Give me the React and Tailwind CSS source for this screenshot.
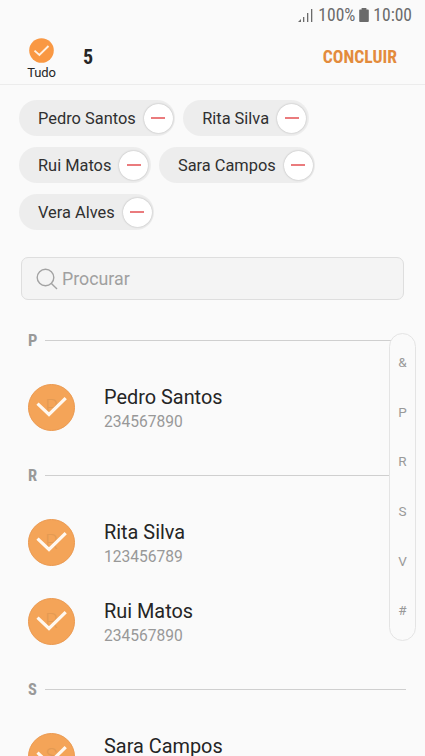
import React from "react";

const chipRows = [
  ["Pedro Santos", "Rita Silva"],
  ["Rui Matos", "Sara Campos"],
  ["Vera Alves"],
];

const sections = [
  { letter: "P", contacts: [{ name: "Pedro Santos", phone: "234567890" }] },
  {
    letter: "R",
    contacts: [
      { name: "Rita Silva", phone: "123456789" },
      { name: "Rui Matos", phone: "234567890" },
    ],
  },
  { letter: "S", contacts: [{ name: "Sara Campos" }] },
];

const indexLetters = ["&", "P", "R", "S", "V", "#"];

const StatusBar = () => (
  <div className="flex h-[30px] shrink-0 items-center justify-end pr-[13px] text-[17.5px] leading-[30px] text-[#6b6b6b]">
    <svg width="15" height="14" viewBox="0 0 15 14" className="mr-[5px]" fill="#6b6b6b">
      <path d="M0 14 L3 11 V14 Z" />
      <rect x="5" y="9" width="1.3" height="5" />
      <rect x="9" y="5" width="1.3" height="9" />
      <rect x="13" y="1" width="1.3" height="13" />
    </svg>
    <span className="font-['Roboto_Condensed',Roboto,sans-serif] [font-stretch:75%]">100%</span>
    <svg width="10" height="14" viewBox="0 0 10 14" className="mx-[4px]" fill="#6b6b6b">
      <path d="M2.6 0 H7.4 V1.4 H9 Q9.8 1.4 9.8 2.2 V13 Q9.8 14 9 14 H1 Q0.2 14 0.2 13 V2.2 Q0.2 1.4 1 1.4 H2.6 Z" />
    </svg>
    <span className="font-['Roboto_Condensed',Roboto,sans-serif] [font-stretch:75%]">10:00</span>
  </div>
);

const Header = () => (
  <header className="flex h-[55px] shrink-0 border-b border-[#ececec]">
    <button className="ml-[27px] flex w-[29px] flex-col items-center pt-[8px]">
      <svg width="25" height="25" viewBox="0 0 25 25">
        <circle cx="12.5" cy="12.5" r="12.3" fill="#f99843" />
        <path d="M5.5 12.6 L10.4 17 L19.5 8" fill="none" stroke="#fff1e2" strokeWidth="1.9" />
      </svg>
      <span className="mt-[2px] text-[13px] leading-[15px] tracking-[-0.1px] text-[#252525]">Tudo</span>
    </button>
    <span className="ml-[27px] font-['Roboto_Condensed',Roboto,sans-serif] text-[20px] leading-[55px] font-bold text-[#252525] [font-stretch:75%]">
      5
    </span>
    <button className="mr-[28px] ml-auto font-['Roboto_Condensed',Roboto,sans-serif] text-[17.6px] leading-[54px] font-bold text-[#e38b3c] [font-stretch:75%]">
      CONCLUIR
    </button>
  </header>
);

const Chip = ({ name }) => (
  <div className="flex h-[36px] items-center rounded-full bg-[#ededed] pr-[2.5px] pl-[19px]">
    <span className="pt-[2px] text-[16.4px] leading-[22px] text-[#303030]">{name}</span>
    <button className="ml-[8px] flex size-[29px] items-center justify-center rounded-full bg-white shadow-[0_0_2px_rgba(0,0,0,0.28)]">
      <span className="h-[2px] w-[14px] bg-[#ea7b7d]" />
    </button>
  </div>
);

const Avatar = ({ letter }) => (
  <div className="relative flex size-[47px] items-center justify-center rounded-full border border-[#eb994f] bg-[#f4a458]">
    <span className="text-[20px] leading-none font-light text-[#e39a53]">{letter}</span>
    <svg className="absolute inset-0" width="45" height="45" viewBox="0 0 45 45">
      <path d="M8.5 18.7 L20 29.5 L36.7 13.2" fill="none" stroke="#fff8f0" strokeWidth="3.2" />
    </svg>
  </div>
);

const ContactRow = ({ contact }) => (
  <div className="flex h-[79px] pt-[15.5px] pl-[28px]">
    <Avatar letter={contact.name[0]} />
    <div className="ml-[29px] pt-[1px]">
      <p className="text-[19.9px] leading-[25px] text-[#252525]">{contact.name}</p>
      {contact.phone && (
        <p className="mt-[1px] text-[15.6px] leading-[22px] text-[#989898]">{contact.phone}</p>
      )}
    </div>
  </div>
);

const Section = ({ section }) => (
  <section>
    <div className="flex h-[56px] items-center pr-[19px] pl-[28px]">
      <span className="w-[16.5px] pt-[2px] font-['Roboto_Condensed',Roboto,sans-serif] text-[16.5px] leading-none font-bold text-[#999] [font-stretch:75%]">
        {section.letter}
      </span>
      <div className="h-px flex-1 bg-[#cfcfcf]" />
    </div>
    {section.contacts.map((contact) => (
      <ContactRow key={contact.name} contact={contact} />
    ))}
  </section>
);

const App = () => {
  return (
    <div className="relative flex h-[756px] w-[425px] flex-col overflow-hidden bg-[#fafafa] font-[Roboto,sans-serif]">
      <StatusBar />
      <Header />

      {/* Selected contacts */}
      <div className="flex shrink-0 flex-col gap-[11px] pt-[15px] pl-[19px]">
        {chipRows.map((row, i) => (
          <div key={i} className="flex gap-[8px]">
            {row.map((name) => (
              <Chip key={name} name={name} />
            ))}
          </div>
        ))}
      </div>

      {/* Search field */}
      <div className="mt-[27px] mr-[21px] ml-[21px] flex h-[43px] shrink-0 items-center rounded-[7px] border border-[#dedede] bg-[#f4f4f4] pl-[14px]">
        <svg width="22" height="22" viewBox="0 0 22 22" fill="none" stroke="#a3a3a3" strokeWidth="1.4">
          <circle cx="9.5" cy="9.5" r="8.3" />
          <path d="M15.4 15.4 L21 21" />
        </svg>
        <span className="ml-[4px] pt-[2px] text-[17.8px] text-[#a0a0a0]">Procurar</span>
      </div>

      <main className="mt-[12px] shrink-0">
        {sections.map((section) => (
          <Section key={section.letter} section={section} />
        ))}
      </main>

      {/* Index scroller floating over the list */}
      <nav className="absolute top-[333px] right-[9px] flex h-[308px] w-[27px] flex-col items-center rounded-full border border-[#e4e4e4] bg-[#fafafa] pt-[4px] text-[13.5px] text-[#999]">
        {indexLetters.map((letter) => (
          <span key={letter} className="h-[49.7px] leading-[49px]">
            {letter}
          </span>
        ))}
      </nav>
    </div>
  );
};

export default App;
